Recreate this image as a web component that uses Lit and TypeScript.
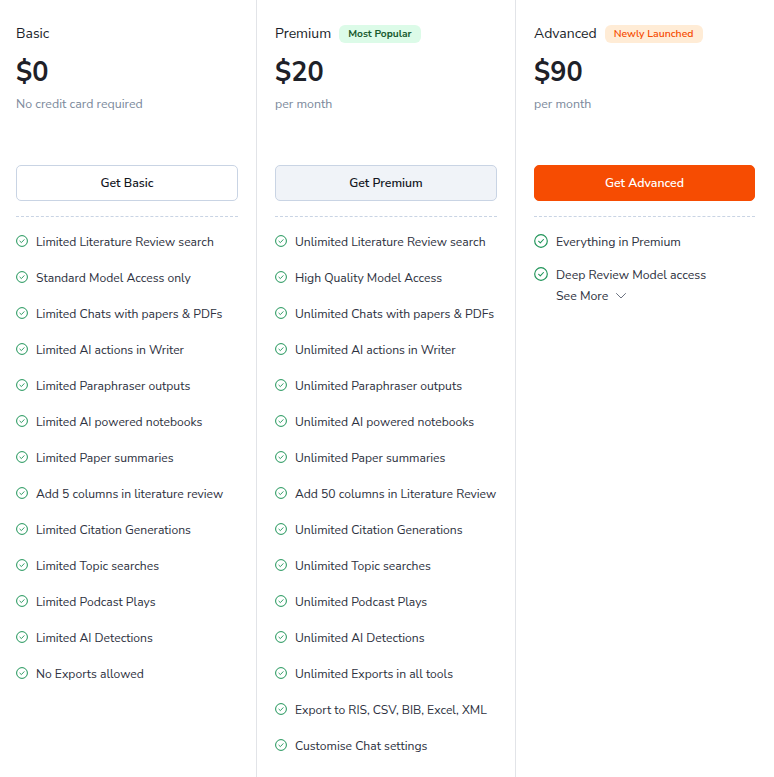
import { LitElement, html, css, svg } from "lit";
import { customElement } from "lit/decorators.js";

const basic = ["Limited Literature Review search","Standard Model Access only","Limited Chats with papers & PDFs","Limited AI actions in Writer","Limited Paraphraser outputs","Limited AI powered notebooks","Limited Paper summaries","Add 5 columns in literature review","Limited Citation Generations","Limited Topic searches","Limited Podcast Plays","Limited AI Detections","No Exports allowed"];
const premium = ["Unlimited Literature Review search","High Quality Model Access","Unlimited Chats with papers & PDFs","Unlimited AI actions in Writer","Unlimited Paraphraser outputs","Unlimited AI powered notebooks","Unlimited Paper summaries","Add 50 columns in Literature Review","Unlimited Citation Generations","Unlimited Topic searches","Unlimited Podcast Plays","Unlimited AI Detections","Unlimited Exports in all tools","Export to RIS, CSV, BIB, Excel, XML","Customise Chat settings"];
const advanced = ["Everything in Premium","Deep Review Model access"];

const check = svg`<svg class="check" viewBox="0 0 12 12" fill="none"><circle cx="6" cy="6" r="5.4" stroke="#1f9458" stroke-width="1"/><path d="M3.9 6.2l1.5 1.4 2.7-2.9" stroke="#1f9458" stroke-width="0.9" stroke-linecap="round" stroke-linejoin="round"/></svg>`;

@customElement("app-root")
export class AppRoot extends LitElement {
  static styles = css`
    :host { display: block; width: 774px; height: 777px; overflow: hidden; background: #fff; font-family: "Nunito Sans", Lato, "Open Sans", sans-serif; color: #2b2f38; }
    .grid { display: grid; grid-template-columns: 257px 259px 258px; height: 777px; }
    .col { padding: 24px 18px 0 16px; border-right: 1px solid #e2e4e8; box-sizing: border-box; }
    .col.p { padding-left: 18px; padding-right: 18px; }
    .col.a { border-right: 0; padding-left: 18px; padding-right: 19px; }
    .head { display: flex; align-items: center; gap: 8px; height: 18px; }
    .name { font-size: 14px; line-height: 18px; margin-top: 2px; color: #1a1e2a; }
    .badge { font-size: 10.2px; font-weight: 700; line-height: 18px; height: 18px; padding: 0 9px; border-radius: 6px; margin-top: 2px; }
    .green { background: #dcfbe8; color: #1a5c30; }
    .orange { background: #ffecd6; color: #f64c02; font-size: 10.5px; font-weight: 600; }
    .price { font-size: 27px; font-weight: 700; line-height: 32px; margin-top: 15px; color: #1e2128; }
    .sub { font-size: 12.4px; line-height: 18px; margin-top: 6px; color: #7c8a9c; height: 67px; }
    .btn { box-sizing: border-box; height: 36px; border-radius: 5px; border: 1px solid #c9d4e4; display: flex; align-items: center; justify-content: center; font-size: 12.3px; font-weight: 600; color: #14171f; background: #fff; margin-top: 3px; }
    .btn.pb { background: #f0f3f8; }
    .btn.ab { background: #f64c02; border-color: #f64c02; color: #fff; }
    .rule { border-top: 1px dashed #c9d4e4; margin: 15px 0 16px; }
    ul { list-style: none; margin: 0; padding: 0; display: flex; flex-direction: column; gap: 18px; }
    .a ul { gap: 15px; }
    li { display: flex; align-items: flex-start; gap: 8px; font-size: 12.15px; line-height: 18px; color: #2d3140; white-space: nowrap; }
    .a li { font-size: 12.3px; }
    .check { width: 12px; height: 12px; flex: none; margin-top: 2px; }
    .a .check { width: 14px; height: 14px; margin-top: 1px; }
    .more { display: flex; align-items: center; gap: 8px; margin: 3px 0 0 22px; font-size: 12.35px; line-height: 18px; color: #2d3140; }
    .more svg { width: 10px; height: 6px; }
  `;

  private list(items: string[]) {
    return html`<ul>${items.map((t) => html`<li>${check}<span>${t}</span></li>`)}</ul>`;
  }

  render() {
    return html`<div class="grid">
      <section class="col">
        <div class="head"><span class="name">Basic</span></div>
        <div class="price">$0</div>
        <div class="sub">No credit card required</div>
        <div class="btn">Get Basic</div>
        <div class="rule"></div>
        ${this.list(basic)}
      </section>
      <section class="col p">
        <div class="head"><span class="name">Premium</span><span class="badge green">Most Popular</span></div>
        <div class="price">$20</div>
        <div class="sub">per month</div>
        <div class="btn pb">Get Premium</div>
        <div class="rule"></div>
        ${this.list(premium)}
      </section>
      <section class="col a">
        <div class="head"><span class="name">Advanced</span><span class="badge orange">Newly Launched</span></div>
        <div class="price">$90</div>
        <div class="sub">per month</div>
        <div class="btn ab">Get Advanced</div>
        <div class="rule"></div>
        ${this.list(advanced)}
        <div class="more">See More <svg viewBox="0 0 10 6" fill="none"><path d="M.5.5L5 5l4.5-4.5" stroke="#6b7280" stroke-width="1" stroke-linecap="round" stroke-linejoin="round"/></svg></div>
      </section>
    </div>`;
  }
}
